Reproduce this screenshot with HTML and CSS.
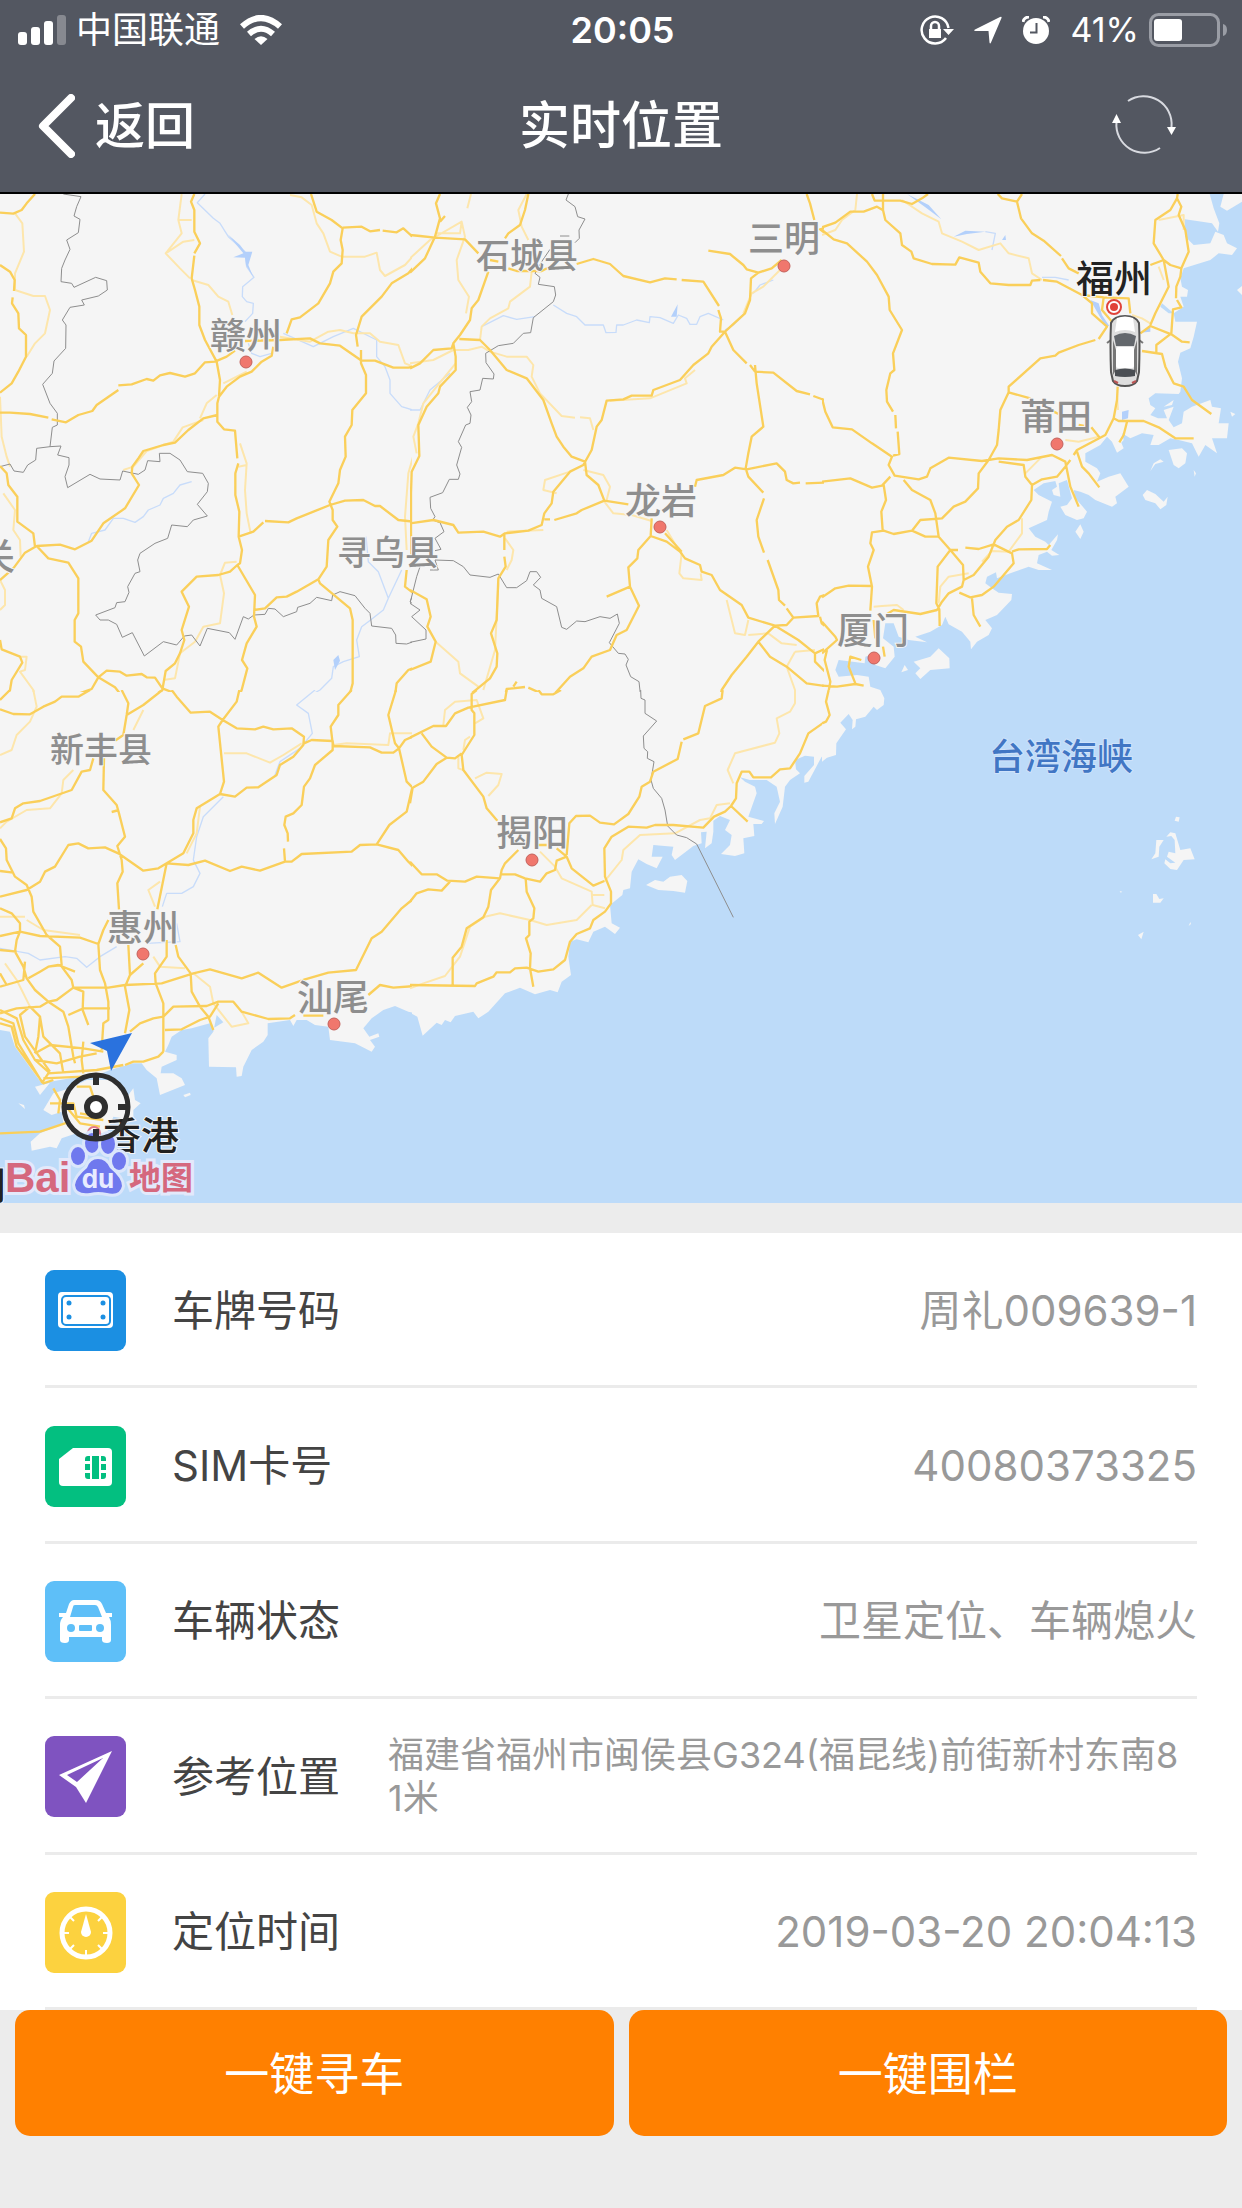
FILE: index.html
```html
<!DOCTYPE html>
<html lang="zh-CN">
<head>
<meta charset="utf-8">
<meta name="viewport" content="width=device-width, initial-scale=1">
<title>实时位置</title>
<link rel="stylesheet" href="styles.css">
</head>
<body>
<div class="app">
  <header class="header">
    <div class="status">
      <div class="status-left">
        <svg width="48" height="30" viewBox="0 0 48 30" fill="#fff" aria-hidden="true">
          <rect x="0" y="17" width="9" height="13" rx="3"/><rect x="13" y="12" width="9" height="18" rx="3"/>
          <rect x="26" y="6" width="9" height="24" rx="3"/><rect x="39" y="0" width="9" height="30" rx="3" opacity=".3"/>
        </svg>
        <span class="carrier">中国联通</span>
        <svg width="42" height="30" viewBox="0 0 42 30" aria-hidden="true">
          <g fill="none" stroke="#fff" stroke-width="6"><path d="M2 11.500Q21 -5.500 40 11.500"/><path d="M9 19Q21 8.500 33 19"/></g>
          <path d="M14.500 24Q21 18.500 27.500 24L21 30Z" fill="#fff"/>
        </svg>
      </div>
      <time class="clock">20:05</time>
      <div class="status-right">
        <svg width="34" height="30" viewBox="0 0 34 30" aria-hidden="true">
          <g fill="none" stroke="#fff" stroke-width="2.500"><path d="M26 23A13.500 13.500 0 1 1 28.500 13"/><path d="M11 14V11a4 4 0 0 1 8 0v3"/></g>
          <path d="M23 14h11l-5.500 6ZM9 14h12v9H9Z" fill="#fff"/>
        </svg>
        <svg width="28" height="28" viewBox="0 0 28 28" aria-hidden="true"><path d="M1 13.500 26 1Q28 0 27.500 2L17 26.500Q16 28.500 15.500 26.500L14.500 15H1.500Q-1 14.500 1 13.500Z" fill="#fff"/></svg>
        <svg width="28" height="28" viewBox="0 0 28 28" aria-hidden="true">
          <circle cx="14" cy="15" r="13" fill="#fff"/><path d="M1 6A6 6 0 0 1 7 1M21 1a6 6 0 0 1 6 5" stroke="#fff" stroke-width="3" fill="none"/>
          <path d="M14.500 7v9.500H8" fill="none" stroke="#535761" stroke-width="2"/>
        </svg>
        <span class="percent">41%</span>
        <svg width="78" height="34" viewBox="0 0 78 34" aria-hidden="true">
          <rect x="1.500" y="1.500" width="68" height="31" rx="8" fill="none" stroke="#9a9da5" stroke-width="3"/>
          <rect x="5" y="6" width="28" height="22" rx="3" fill="#fff"/><path d="M74 11q4 1 4 6t-4 6Z" fill="#9a9da5"/>
        </svg>
      </div>
    </div>
    <nav class="nav">
      <button class="back" type="button">
        <svg width="37" height="64" viewBox="0 0 37 64" aria-hidden="true"><path d="M33 4 5 32l28 28" fill="none" stroke="#fff" stroke-width="8" stroke-linecap="round" stroke-linejoin="round"/></svg>
        <span>返回</span>
      </button>
      <h1 class="title">实时位置</h1>
      <button class="refresh" type="button" aria-label="刷新">
        <svg width="64" height="64" viewBox="0 0 64 64" aria-hidden="true">
          <g fill="none" stroke="#d8dae0" stroke-width="2"><path d="M16 7A28 28 0 0 1 59.500 33"/><path d="M48 54A28 28 0 0 1 4.500 28"/></g>
          <path d="M55 33h9l-4.500 8ZM0 29h9l-4.500-9Z" fill="#fff"/>
        </svg>
      </button>
    </nav>
  </header>

  <main>
    <section class="map" aria-label="地图">
      <svg class="map-canvas" viewBox="0 194 1242 1009">
        <rect class="land" y="194" width="1242" height="1009"/>

        <!-- north-west -->
        <svg x="0" y="190" width="412" height="502" viewBox="0 0 1236 1506">
          <path class="river" d="M615 12 592 38 640 85 660 100 685 140 735 185 740 230 762 262 728 290 727 320 740 335 760 340 758 370 735 395M575 875 540 885 520 910 490 925 480 945 445 960 430 980 405 997 370 985 340 985 315 1020 275 1030 265 1055M850 430 940 470 1000 440 1060 415 1130 450 1130 500 1155 530 1170 570 1170 610 1205 650 1255 665M1098 1040 1105 1115 1135 1145 1165 1225 1150 1260 1105 1295 1085 1310 1070 1350 1078 1400 1030 1415 1000 1430 995 1465 960 1500 905 1530M1205 1140 1165 1225M745 460 755 490 780 500 815 490"/>
          <path class="lake" d="M683 133 720 165 735 185 757 185 745 225 760 262 738 225 735 203 700 202 730 190ZM1015 1395 1020 1412 1005 1440 1000 1410Z"/>
          <path class="minor" d="M45 70 67 100 72 185 45 250 45 300 100 318 135 318 150 360 135 430 105 460 80 500M545 12 535 90 545 130 497 190 540 235 570 265M535 90H575M497 190 550 155 583 150M575 270 625 285 655 320 685 335 697 375M870 15 905 22 935 45 950 100 970 130 990 185 1025 200 1095 200 1130 188 1140 240 1155 258 1215 225 1260 175M0 620 5 740 20 800 30 830M10 910 45 960 40 1020 60 1050 62 1100M720 760 740 820 735 900 740 970 752 1030M715 830 740 825M710 1115 675 1118 660 1155 672 1210 660 1300 610 1310 585 1355 540 1390 525 1465 490 1470M840 440 930 455 985 425 1020 420 1060 430 1110 430 1140 455 1195 465 1215 520 1240 530M370 840 400 830 440 783 520 755 548 712 610 690M600 685 620 640 650 615M670 580 740 545M0 1170 15 1200 15 1245 0 1260M62 1400 80 1400 75 1440 60 1445 100 1500 105 1530M1260 680 1240 730 1245 780 1225 850 1215 980 1220 1080"/>
          <path class="border" d="M190 12 243 20 230 50 222 78 240 88 235 128 200 150 210 178 195 210 185 235 183 275 215 280 222 292 287 262 320 272 322 300 295 318 245 330 253 345 210 352 187 390 198 405 197 475 162 513 157 550 128 583 150 640 172 670 172 705 157 712 150 770 183 768 173 795 207 803 207 825 195 860 203 893 270 853 300 867 360 870 368 843 415 853 435 840 443 812 480 815 478 790 510 790 540 810 562 845 608 850 625 880 622 905 592 943 622 978 580 990 562 1010 515 1005 503 1045 465 1060 420 1090 413 1110 420 1145 405 1150 383 1190 387 1207 375 1235 350 1238 345 1253 287 1275 300 1290 325 1290 350 1303 367 1342 397 1328 433 1398 490 1355 530 1365 553 1338 575 1335 600 1368 622 1315 688 1328 705 1348 730 1280 745 1287 762 1275 795 1273 805 1255 825 1257 850 1280 890 1265 893 1252 930 1240 950 1222 995 1232 998 1215 1020 1205 1065 1217 1095 1255 1110 1270 1115 1308 1175 1315 1187 1335 1188 1360 1220 1362 1260 1348M0 830 30 822 42 843 70 847 83 825 107 810 110 775 150 770M1260 1140 1245 1165 1245 1200 1230 1235 1260 1260"/>
          <path class="major" d="M0 68 40 71 65 60 80 40 105 12M0 225 30 245 44 270 42 303M38 322 36 340 55 370 57 415 78 435 78 500 55 545 35 580 0 608M0 668 30 668 90 672 145 683M155 688 198 697 235 675 277 663 290 645 355 600M355 586 395 583 440 567 460 572 480 556 510 549 555 560 585 550 615 517 645 515 680 500 705 482M583 12 573 35 583 60 583 125 600 160 583 190M583 197 575 265 585 300 598 350 598 405 615 450 650 515 660 570 657 620 652 640 652 695 672 718 705 722 712 805M715 820 706 850 706 915 718 965 716 1040 726 1080 720 1120 712 1125 765 1215 762 1280 770 1310 740 1360 726 1410 742 1435 725 1500 712 1530M657 620 680 590 720 560 755 545 785 515 815 497 820 470M652 675 610 685 565 720 525 758 490 765 430 783 415 805 397 830 395 850 417 885 375 955 310 1000 275 1052 225 1078 180 1064 110 1068M0 1170 40 1135 75 1088 110 1068 145 1105 205 1118 235 1165 235 1270 224 1290 224 1355 243 1370 250 1415 295 1462 345 1492 375 1530M295 1462 320 1442 360 1445 380 1457 425 1452 440 1462 465 1463 487 1495 525 1510 530 1530M295 1462 275 1497 210 1520 165 1527M0 828 20 850 25 885 52 920 52 995 100 1030 105 1070M0 1350 5 1378 60 1400 67 1418 35 1470 30 1500 10 1530M712 1125 690 1145 655 1155 590 1160 545 1205 567 1250 545 1320 553 1350 540 1390 525 1420 497 1443 487 1500 445 1530M716 1040 760 1025 790 997M795 993 865 997 890 985 990 945 1035 932 1090 930 1125 948 1140 948 1195 990 1260 997M762 1260 795 1255 830 1222 860 1220 890 1205 955 1168 960 1180 1050 1255 1058 1290 1058 1480 1050 1510 1030 1530M955 1168 980 1130 985 1050 1012 1010 998 990 998 960 988 935 1015 880 1020 840 1037 800 1035 740 1055 705 1057 660 1098 610 1098 555 1083 520 1083 480M1073 470 1068 435 1085 380 1145 320 1175 280 1225 250 1255 215M860 430 875 388 900 382 955 340 990 280 1000 245 1025 220 1028 180 1022 150 1028 115 995 90 950 65 933 12M1028 113 1085 110 1110 124 1140 120M1148 122 1190 127 1210 115 1235 138 1260 133M840 450 930 445 960 460 1020 467 1085 512 1125 512 1180 533 1225 533 1260 527M735 453 840 450M1220 1140 1215 1190 1260 1225M1260 1425 1225 1440 1190 1480 1183 1530"/>
        </svg>

        <!-- north -->
        <svg x="410" y="190" width="414" height="502" viewBox="0 0 1242 1506">
          <path class="river" d="M430 345 470 370 500 380 525 405 580 405 588 428 618 427 620 405 640 405 680 390 718 398 720 380 750 383 790 400 805 375 830 385 840 403 860 403 870 380 895 370 940 390M215 410 280 377 320 388 375 380M945 420 970 405 1000 375M1030 310 1050 285 1090 270M0 660 30 660 60 600 120 550"/>
          <path class="lake" d="M803 343 800 380 783 380Z"/>
          <path class="minor" d="M183 12 172 55M0 205 60 150 155 95 165 140 140 210 145 270 177 320 168 370M155 95 150 130 80 130M350 12 325 60 335 110 355 150M365 245 360 290 300 335 295 355 240 385 215 410 210 450M240 485 290 500 350 500 370 525 365 560 390 610 455 678 495 683M510 682 540 685 550 720M0 520 70 510 130 480 175 480 215 470 240 485M137 520 80 590 40 640 25 700 10 740 20 790M600 632 720 625 830 580 825 565 855 540M520 840 580 855 600 890 590 930M480 845 405 870 400 900 440 910M583 935 610 970 665 975 725 993M285 1045 310 1080 305 1110 290 1140M290 1025 400 1020M770 1020 800 1070 815 1090 808 1150 820 1165 875 1170 872 1150M950 1230 975 1330 1005 1335 1015 1290M1015 1335 1075 1330 1115 1360 1160 1365M1155 1385 1130 1430 1155 1500 1155 1530M1155 1385 1215 1380M265 1180 255 1380 220 1500M77 1355 145 1415 150 1450 205 1490M1000 370 1025 310 1060 290 1110 240"/>
          <path class="border" d="M475 12 468 30 495 50 503 80 525 87 507 120 508 145 495 158M450 138H478M420 178 395 215 375 250 390 262 385 283 433 290 437 315 430 335 370 383 362 428 340 430 310 460 265 467 227 490 228 518 252 552 250 567 218 565 210 600 180 605 185 635 172 652 183 675 180 700 167 705 145 755 155 772 140 825 150 852 145 868 118 868 98 908 60 922 62 955 75 980 68 990 90 998 102 1025 75 1045 93 1078 75 1082M60 1140 85 1140 75 1110 130 1112 160 1130 180 1155 240 1162 265 1152 290 1193 320 1193 350 1172 360 1145 380 1145 392 1162 370 1185 390 1200 395 1225 440 1250 455 1312 470 1318 500 1293 525 1295 570 1280 600 1285 622 1272 628 1300 598 1358 625 1390 645 1392 655 1408 648 1425 662 1460 687 1475 693 1530M30 1130 20 1160 0 1240 30 1260 5 1280 48 1320 48 1347 0 1357"/>
          <path class="major" d="M90 12 78 40 90 85 75 140 45 205 0 248M90 95 105 78M0 135 30 138 75 143 165 148 205 190M240 210 265 215M295 235 320 243 395 243 440 220M500 222 550 207 600 222 640 258 720 277 765 265 800 268M815 270 880 275 927 348M355 12 345 60 330 105 295 130 285 145M235 245 205 330 185 355 180 390 150 435 130 460 125 475 70 480 30 520 0 535M130 460 137 500 137 540 90 590 85 610 50 650 25 705 28 798 5 845 3 910 3 1100M148 447 210 450 240 480 290 540 350 565 400 630 425 700 440 740 460 770 485 800 525 815 530 855 565 885 583 932 655 943M945 425 905 470 895 490 850 525 810 570 730 600 725 617 665 617 640 628 590 632 575 690 560 710 545 780 520 825 480 845 430 905 425 940 403 970 395 1005 355 1022 285 1030 270 1040 220 1025 145 1028 130 1005 70 990 0 1000M433 990 500 970 515 960 583 932M403 988H420M283 1030V1080M283 1100 287 1130 265 1165 260 1290 243 1330 262 1390 260 1430 240 1465 185 1510 180 1530M0 1200 50 1228 62 1280 52 1310 77 1355 62 1415 0 1440M895 182 960 192 1000 225 1010 238 1045 248 1085 235 1115 210M1045 248 1023 265 1020 330 1005 370 945 425 930 425 933 385 925 360M945 425 970 480 1010 520M1020 525 1035 545 1090 548 1160 603 1200 613M1210 618 1243 630 1250 680 1260 692M1035 525 1040 580 1060 710 1025 740 1015 790 1007 835 1015 860 1060 908M1062 925 1040 990 1045 1040 1062 1088M1073 1110 1105 1200 1107 1230 1125 1247M1130 1255 1150 1283M855 890 860 870 940 855 975 833 1010 838 1100 820 1125 845 1130 870 1150 880 1170 878M1187 880 1260 877M725 985 722 1038 685 1080 682 1105 655 1132 660 1190 687 1247 650 1320 620 1335 600 1380 545 1400 520 1435 480 1460 435 1510 400 1513 355 1493M345 1491 290 1497 282 1530M660 1190 590 1220M320 1475 310 1490M722 1038 770 1055 810 1085 825 1105 870 1125 875 1145 905 1155 930 1200 995 1245 1015 1283 1095 1307 1130 1305 1150 1283 1225 1278 1220 1240 1230 1220 1260 1210M765 1030 815 1085M1095 1307 1045 1355 1010 1400 965 1455 935 1500 930 1530M1095 1307 1165 1350 1215 1390 1215 1415 1260 1460M1045 1355 1080 1400 1130 1430 1190 1480 1260 1490M1230 1280 1235 1300 1260 1320M1215 1390 1260 1370M1250 1380 1245 1440M1190 12 1200 40 1213 90M1260 110 1230 118 1260 140"/>
        </svg>

        <!-- north-east -->
        <svg x="822" y="190" width="420" height="502" viewBox="0 0 1260 1506">
          <path class="sea" d="M1163 12 1175 55 1192 100 1188 125 1170 100 1120 92 1088 88 1090 140 1115 165 1165 160 1180 125 1205 135 1215 160 1245 175 1230 195 1190 190 1165 210 1085 235 1075 265 1080 290 1098 300 1095 320 1075 320 1085 350 1055 370 1020 340 1015 350 1040 370 1055 370 1060 395 1125 395 1115 440 1105 475 1075 488 1068 515 1080 565 1075 605 1070 612 1000 610 980 625 985 645 1000 655 985 675 1008 685 1035 685 1025 660 1055 650 1040 690 1055 712 1080 700 1085 665 1110 650 1165 630 1170 650 1197 655 1190 700 1220 700 1215 745 1170 745 1185 790 1150 765 1130 800 1110 760 1070 750 1045 745 1010 765 985 765 995 735 960 730 925 745 900 730 905 750 898 758 905 775 885 788 870 755 855 740 835 765 790 790 790 815 825 835 835 850 825 875 860 860 895 850 920 890 880 920 885 940 870 950 820 930 800 915 775 905 755 900 760 925 778 945 795 965 785 985 765 990 730 975 715 950 735 945 750 925 735 870 710 880 715 920 695 915 690 900 705 890 700 873 665 880 635 900 650 915 690 935 680 965 675 990 620 1015 640 1040 670 1055 680 1065 708 1033 705 1050 688 1080 712 1095 690 1097 675 1085 650 1095 645 1120 690 1140 650 1140 620 1130 565 1150 525 1165 522 1147 495 1160 490 1180 510 1195 530 1208 570 1212 568 1230 525 1275 490 1290 510 1315 500 1335 465 1355 447 1378 445 1355 420 1325 380 1303 370 1280 360 1305 325 1325 280 1340 315 1357 260 1350 230 1340 215 1300 190 1300 183 1345 215 1370 218 1400 190 1435 160 1425 145 1395 130 1400 128 1420 50 1410 40 1440 50 1460 105 1455 140 1460 145 1490 175 1500 185 1530H1260V12Z"/>
          <path class="land" d="M1205 12 1195 50 1215 62 1260 35V12ZM1245 300 1260 288V315ZM1025 650 1055 630 1050 645ZM1225 665 1240 672 1230 680ZM1040 780 1080 775 1095 790 1090 820 1070 835 1055 825ZM985 843 995 820 1015 808 1025 815 1000 822ZM962 915 975 900 1000 912 1025 935 1037 920 1033 945 1015 958 1000 940 970 930ZM760 1025 775 1003 785 1025 775 1047ZM275 1415 325 1400 350 1375 382 1405 383 1435 325 1440 295 1467 280 1450 295 1435ZM238 1447 248 1425 258 1440ZM1115 840 1122 850 1118 860Z"/>
          <path class="lake" d="M255 12 320 45 358 88 310 52ZM395 140 430 122 490 125 435 132ZM540 150 550 135 552 150ZM805 330 830 340 840 375 862 408 850 408 825 365ZM955 428 985 412 985 425ZM900 665 920 660 918 685 900 690Z"/>
          <path class="river" d="M490 125 520 130 510 180M660 262 700 262 740 270"/>
          <path class="minor" d="M240 30 300 70 350 95 360 130 420 155 470 180 535 160 560 190 620 205 630 250 660 270M0 135 40 120 60 90 100 60 105 12M610 850 660 800M600 985 600 1030 560 1085 510 1083 480 1115M440 1150 380 1160 355 1190 350 1240M155 1250 180 1248 225 1245 245 1260M730 750 770 755 830 740M885 620 888 660M1010 230 1025 270M1010 90 1085 75 1085 120M930 375 960 385 985 400"/>
          <path class="major" d="M0 112 40 98 85 65 125 65 165 50 182 60M150 12 158 32 235 32 270 42 300 25 318 12M183 12V60L190 90 235 130 240 165 268 185 275 205 330 222 400 224 412 202 470 218 475 245 505 280 560 285 625 285 630 272 655 270M663 270 705 275 780 315 845 322 920 325 925 370M0 120 35 148 75 160 135 215 165 255 200 320 203 360 240 420 213 490 217 540 205 550 193 600 195 635 213 665M220 675 222 715M227 725 232 792 213 797M527 12 540 25 585 35 597 85 630 130 665 152 717 198M720 205 740 235 770 250M585 35 600 12M1067 12 1065 25 1045 60 1000 90 995 160 1025 210 1040 290 1000 370 985 405M1065 25 1078 50 1070 75 1090 120 1100 185 1078 235 1075 260 1063 290 1062 325M1025 210 1045 225 1078 235M985 225 1025 210M1065 330 1078 352 1053 358 1048 430 1003 465 1003 488M955 430 985 408 1048 433 1080 455 1103 457M960 483 1020 492 1030 530 1055 580 1085 590 1110 630 1168 672M780 315 810 340 810 370 855 410 830 447M820 450 770 465 710 488 700 497 655 505 560 590 560 607 625 625M695 665 710 672M770 705 788 708M808 712 832 742M845 322 840 360 870 395M887 590 885 630 875 685 850 735 765 780 755 795M875 685 890 693 965 693 1010 712 1060 745 1115 745M915 695 905 735 892 757M560 607 535 660 530 720 525 765 500 810 470 850 468 895 430 935 395 950 360 985 295 990 270 1022M0 625 10 665 32 712 90 718 150 760 210 800 200 825 218 857 290 868 315 860 325 835 380 803 480 813 530 805 615 810 690 795 730 815 745 890 770 950M530 815 605 825 610 860 630 885M765 785 780 830 800 850 832 892M745 810 730 830 705 860 660 868 630 885 628 930 590 990 555 1010 520 1050 500 1100 455 1155 425 1170 420 1190 380 1210 360 1235 345 1260 295 1272 215 1260 190 1275M0 875 85 865 150 893 180 887 205 860M185 885 192 930 178 965 182 1022M245 870 270 900 325 930 340 970 350 1040 385 1080 408 1080M145 1262 150 1190 138 1130 155 1080 145 1060 150 1027 185 1022 215 1032 270 1022 310 1040 350 1040M430 1073 470 1077 515 1063 570 1090 575 1120 515 1190 480 1215 445 1222 412 1208M570 1085 590 1078 675 1077 685 1065M385 1080 423 1125 425 1170M385 1080 347 1130 343 1240 352 1258 353 1308M450 1225 455 1275 475 1310M0 1222 40 1195 80 1187 148 1188M0 1295 40 1340 45 1350 0 1390M15 1380 8 1410 25 1475 15 1530M0 1487 45 1490 100 1482 125 1487M100 1480 80 1430 85 1400 118 1410M155 1290 160 1345M183 1370 188 1400"/>
        </svg>

        <!-- south-west -->
        <svg x="0" y="690" width="412" height="513" viewBox="0 0 1236 1539">
          <path class="sea" d="M0 1020 30 1025 45 1070 125 1180 210 1165 280 1160 330 1140 400 1120 425 1120 440 1140 470 1165 480 1215 555 1185 545 1165 520 1150 482 1150 485 1130 530 1110 530 1095 495 1085 505 1065 515 1040 545 1020 575 1015 630 1000 640 1015 670 997 650 975 640 1025 625 1045 627 1130 708 1132 710 1160 725 1158 730 1130 755 1080 790 1055 803 1035 803 1000 870 990 880 1008 890 990 920 990 945 1005 985 1010 990 1050 1065 1060 1115 1085 1125 1070 1110 1050 1138 1040 1135 1030 1108 1040 1090 1015 1115 985 1150 960 1185 948 1225 965 1245 970 1260 985V1539H0Z"/>
          <path class="land" d="M130 1260 160 1210 210 1195 260 1170 330 1170 370 1200 385 1215 400 1195 405 1230 422 1240 400 1260 400 1290 340 1280 320 1330 230 1330 185 1345 170 1375 150 1370 95 1382 92 1355 120 1330 190 1300 185 1265 155 1275ZM55 1240 72 1245 75 1257ZM550 1215 570 1208 572 1215 555 1222ZM105 1190 150 1178 120 1215Z"/>
          <path class="river" d="M945 0 890 45 925 70 937 130 900 175 840 215 825 255M670 320 610 380 590 440 580 510 600 550 580 590 545 610 500 610 487 650M0 775 85 790 120 810 195 800 230 805 260 832 300 800 350 770M440 760 540 755 530 700"/>
          <path class="minor" d="M0 195 35 180 50 135 90 95 110 50 100 0M0 415 20 395 80 360 150 355 185 310 190 270 220 240M480 575 445 600 465 650M600 350 590 430 560 490M672 190 740 190 810 218 850 195 905 160M1000 165 1040 160 1165 165 1170 130 1260 130M80 690 130 720 240 735M0 680H75M580 850 630 890 640 940 695 1010 745 1000 725 965M15 820 50 870 90 950M460 800 480 830 555 835M400 120 430 60"/>
          <path class="major" d="M0 58 40 72 90 73 130 50 165 35 185 20 235 20 270 0M0 30 30 0M365 0 385 40 380 75 370 135 345 152M380 75 430 45 487 0M515 0 530 20 572 68 630 65 668 90 710 115 765 118 790 110 820 118 875 115 912 140 910 165 880 200 840 225 830 255 775 292 740 293 705 320 660 312 590 355 580 390 580 430 550 490 500 520 472 658M718 0 710 35 668 90 655 110 672 275 660 312M280 205 270 240 245 245 215 300 120 333 70 340 45 355 35 385 0 397M312 205 310 300 350 345 357 370 375 440 352 468 365 510 368 545 352 580 357 658M357 360 335 366M0 447 18 475 20 510 45 560 80 585 95 620 100 665 140 735 180 770 185 825 145 830M0 543 40 548M0 620 80 600 120 575 135 545 165 530 205 465 235 460 265 475 315 472 355 490 430 542 475 535 500 520 565 525 615 512 690 543 725 530 780 542 855 515 875 515 905 492 1055 485 1080 465 1130 463 1195 480 1225 515 1260 550M855 515 852 475M864 455 863 430 853 405 857 380 880 370 905 345 912 290 930 265 945 225 998 180 998 160 992 110 1015 75 1015 45 1055 0M912 160 935 150 998 153 1000 168 1110 172 1145 188 1180 188 1197 175 1220 275 1237 292 1220 365 1168 405 1130 463M1188 0 1165 75 1185 160 1197 175 1215 150 1260 130M1260 610 1205 655 1145 725 1115 745 1068 840 985 848 915 868 845 893 775 848 725 865 630 838 580 850 485 880 375 885 325 893 220 893M1105 915 1140 885 1180 893 1260 887M0 655 35 670 60 700 60 725 50 750 45 785 70 830 80 865 105 900 145 935 190 965 205 1010 220 1100 225 1120M0 738 60 725 120 738 240 743 295 762 300 840 315 880 325 935 325 990 310 1000 305 1080M325 690 310 720 295 762M385 765 390 855 375 890 388 960 375 1030M390 855 430 820M500 750 500 800 465 850 467 880 490 940 490 1085M527 765 535 800 572 850 575 905 600 950 625 980 640 1020M490 980 520 950 620 948 655 935 700 935 725 965 805 987 870 985 885 975M910 977H970M495 1020 545 1018 600 990 630 980 655 940M375 1125 400 1115 430 1115 475 1100 490 1085M390 1025 420 1000 460 985 490 980M0 780 50 785M75 815 70 870 0 890M0 850 20 885M85 865 120 845 145 830 175 825 225 845M185 830 215 870 220 893 170 930 145 935 120 950 50 955 0 970M0 960 50 985 70 1050 105 1110 150 1150M0 985 40 1000 55 1060 125 1175M0 1000 35 1010 50 1070 130 1180 160 1170M90 950 60 975 75 1040 150 1145M90 950 120 980 115 1040 105 1090M120 980 130 1040 180 1090 190 1150M220 893 250 905 248 960 265 1005M205 975 250 955 330 955M105 1090 150 1065 250 1075 310 1085M125 1180 145 1150 290 1140 370 1125M130 1165 250 1160M250 1055 245 1110 250 1150M105 1110 170 1120 240 1100 290 1090M160 1195 180 1230 175 1270M150 1240 220 1240 230 1280 310 1290M0 1330 120 1325 150 1315 210 1295M230 1190 270 1190 280 1220M190 1240 240 1300 300 1310M240 1270 300 1280"/>
        </svg>

        <!-- south -->
        <svg x="410" y="690" width="414" height="513" viewBox="0 0 1242 1539">
          <path class="sea" d="M1260 202 1235 200 1195 275 1183 278 1183 258 1212 225 1212 200 1185 197 1155 210 1158 238 1170 250 1140 270 1125 290 1118 350 1095 402 1093 370 1110 335 1100 290 1070 270 1020 270 990 262 1005 275 1035 290 1040 310 1015 380 1062 393 1055 402 1030 402 1033 438 1000 445 1003 490 975 498 933 492 960 465 965 435 945 420 960 390 930 378 910 392 910 425 905 460 885 475 890 425 873 427 875 460 850 468 795 510 785 495 790 470 730 465 725 500 758 500 740 535 710 522 685 508 665 545 660 595 640 600 637 615 600 645 605 700 630 713 615 732 585 710 550 725 535 757 500 748 480 755 475 800 483 855 455 875 443 907 420 900 375 913 330 893 285 910 235 965 205 985 190 965 135 978 122 997 105 990 95 1005 80 998 38 1037 22 980 0 968V1539H1260Z"/>
          <path class="land" d="M708 585 735 570 760 575 780 560 815 555 832 573 825 608 790 603 745 600Z"/>
          <path class="minor" d="M100 105 105 60 135 35 200 30 220 85 195 100M145 195 145 235 160 240M160 180 165 150 180 140M195 265 230 248 275 252 265 285 235 318M390 485 435 530 455 565 545 605 548 645 585 655M548 615H583M545 645 500 690 410 705 360 690 270 670 225 680 180 710 150 800 105 858 40 880 0 895M583 575 635 510 640 480 690 435 795 430 870 390 900 385 920 345 960 340M1155 0 1155 40 1140 65 1100 85 1108 130 1095 158 975 190 953 240 970 280"/>
          <path class="border" d="M692 0 693 25 705 30 705 70 740 93 700 138 702 175 713 185 712 205 732 215 723 270 730 295 755 325 765 360 773 408 800 435 830 443 860 462 970 682"/>
          <path class="major" d="M0 143 70 108 108 108 135 70 175 53 285 30 290 0M200 0 185 12 185 60 193 70 193 135 155 195 160 240 220 320 230 355 262 392M35 130 65 170 110 203 135 205 155 190M110 203 80 222 40 275 8 293 0 340M385 0 395 13 430 13 453 0M938 0 935 25 885 48 865 130 820 148M815 155 803 207 730 245 720 275 695 290 688 320 655 372 612 403 570 398 540 377 498 378 478 400 470 495M1260 25 1255 75 1245 95 1195 130 1170 190 1140 235 1110 238 1083 262 1030 262 1018 245 995 245 980 280 978 325 963 348 945 365 912 380 880 413 790 405 735 405 710 413 655 410 605 440 583 475 585 560 603 605 603 640 585 665 550 690 540 715 500 732 480 755 465 810 430 838 385 845 350 833 315 835 300 847 260 847 250 860 200 880 195 888 0 885M963 348 1013 395M0 515 35 553 80 553 112 572 165 575 200 560 270 565 275 540 285 520 325 480M0 635 20 610 55 598 95 602 120 575M270 565 243 600 235 650 220 682 170 715 155 770 128 803 128 885M275 553 315 553 345 565 390 575 410 550 435 540 440 512 470 500 485 535 550 587 583 573M347 565 350 605 373 655 370 685 358 695 358 735 348 745 362 790 360 835 370 890M440 475 470 500M380 465H410"/>
        </svg>

        <!-- south-east -->
        <svg x="822" y="690" width="420" height="513" viewBox="0 0 1260 1539">
          <path class="sea" d="M0 0H1260V1539H0Z"/>
          <path class="land" d="M0 0H175L187 25 185 45 165 60 155 50 130 80 102 88 100 110 90 118 92 90 80 72 55 98 72 118 43 160 42 195 15 203 0 215ZM1058 392 1062 380 1073 382 1070 395ZM988 508 1000 490 1003 450 1025 450 1012 470 1010 500ZM1033 440 1045 427 1060 430 1075 480 1105 475 1118 508 1085 510 1065 540 1045 537 1027 520 1030 508 1045 520 1060 518 1035 500 1040 485 1060 490 1058 450 1048 438ZM993 612 1003 612 1012 627 1025 625 1015 638 993 638ZM948 735 965 725 958 748ZM1100 708 1105 696 1107 702ZM893 603 901 605 896 608Z"/>
          <path class="major" d="M20 0 12 35 23 75 12 95 0 100"/>
        </svg>

        <g class="dot">
          <circle cx="246" cy="362" r="6"/><circle cx="784" cy="266" r="6"/><circle cx="660" cy="527" r="6"/>
          <circle cx="1057" cy="444" r="6"/><circle cx="874" cy="658" r="6"/><circle cx="532" cy="860" r="6"/>
          <circle cx="143" cy="954" r="6"/><circle cx="334" cy="1024" r="6"/>
        </g>
        <circle cx="1114" cy="307" r="7" fill="#fff" stroke="#e0433a" stroke-width="2"/><circle cx="1114" cy="307" r="4" fill="#e0433a"/>
        <circle cx="94" cy="1133" r="6" fill="#fff" stroke="#e07a8a" stroke-width="2"/>

        <g class="place">
          <text x="246" y="349">赣州</text><text x="784" y="252">三明</text><text x="661" y="514">龙岩</text>
          <text x="1056" y="430">莆田</text><text x="873" y="644">厦门</text><text x="532" y="846">揭阳</text>
          <text x="143" y="941">惠州</text><text x="333" y="1011">汕尾</text><text x="-3" y="570">关</text>
        </g>
        <g class="place county">
          <text x="527" y="268">石城县</text><text x="388" y="565">寻乌县</text><text x="101" y="762">新丰县</text>
        </g>
        <g class="place capital">
          <text x="1114" y="292">福州</text><text x="141" y="1149">香港</text><text x="-32" y="1199">澳门</text>
        </g>
        <text class="place strait" x="1061" y="770">台湾海峡</text>

        <!-- vehicle -->
        <g transform="translate(1106 314)">
          <path d="M5 26 1 29M33 26 37 29" stroke="#777" stroke-width="2"/>
          <path d="M5 9Q8 2 19 2Q30 2 33 9Q34 30 33 58L31 67Q28 72 19 72Q10 72 7 67L5 58Q4 30 5 9Z" fill="#dedede" stroke="#555" stroke-width="2"/>
          <path d="M11 4Q19 1 27 4L29 18Q19 14 9 18Z" fill="#fff"/>
          <path d="M8 22Q19 16 30 22L28 32H10Z" fill="#63676c"/>
          <path d="M7 26 10 36V56L7 61ZM31 26 28 36V56L31 61Z" fill="#777"/>
          <rect x="10" y="33" width="18" height="21" rx="2" fill="#fff"/>
          <path d="M9 56Q19 53 29 56L29 62Q19 64 9 62Z" fill="#4b4f54"/>
          <path d="M8 67l4 2M30 67l-4 2" stroke="#b55" stroke-width="2"/>
        </g>

        <!-- heading -->
        <path d="M90 1043 132 1033 111 1071 107 1051Z" fill="#2a72de"/>

        <!-- map provider mark -->
        <g class="provider">
          <g fill="#6f78ee" stroke="#dbe6fb" stroke-width="6" paint-order="stroke">
            <ellipse cx="78" cy="1156" rx="7" ry="9"/><ellipse cx="92" cy="1143" rx="7" ry="10"/><ellipse cx="108" cy="1144" rx="7" ry="10"/><ellipse cx="119" cy="1161" rx="7" ry="9"/>
            <path d="M98 1159Q106 1159 110 1168Q122 1178 122 1186Q120 1196 107 1193Q98 1191 90 1193Q76 1195 75 1185Q76 1177 87 1168Q90 1159 98 1159Z"/>
          </g>
          <text class="brand" x="5" y="1192">Bai</text>
          <text class="brand-du" x="98" y="1188">du</text>
          <text class="brand-cn" x="129" y="1189">地图</text>
        </g>
      </svg>
      <button class="locate" type="button" aria-label="定位">
        <svg width="70" height="70" viewBox="0 0 70 70" aria-hidden="true">
          <g fill="none" stroke="#2e2e2e" stroke-width="5"><circle cx="35" cy="35" r="32"/><path d="M35 3v10M35 57v10M3 35h10M57 35h10" stroke-width="6"/></g>
          <circle cx="35" cy="35" r="9" fill="#fff" stroke="#2e2e2e" stroke-width="6"/>
        </svg>
      </button>
    </section>

    <dl class="details">
      <div class="row">
        <dt>
          <svg class="icon" viewBox="0 0 81 81" aria-hidden="true"><rect width="81" height="81" rx="9" fill="#1b8fe2"/><rect x="13" y="22" width="55" height="36" rx="4" fill="#fff"/><rect x="17" y="26" width="48" height="29" rx="4" fill="none" stroke="#1b8fe2" stroke-width="2"/><g fill="#1b8fe2"><circle cx="24" cy="33" r="2.500"/><circle cx="58" cy="33" r="2.500"/><circle cx="24" cy="47" r="2.500"/><circle cx="58" cy="47" r="2.500"/></g></svg>
          车牌号码
        </dt>
        <dd>周礼009639-1</dd>
      </div>
      <div class="row">
        <dt>
          <svg class="icon" viewBox="0 0 81 81" aria-hidden="true"><rect width="81" height="81" rx="9" fill="#03bf80"/><path d="M28 22H63Q67 22 67 26V56Q67 60 63 60H18Q14 60 14 56V33Z" fill="#fff"/><g fill="#03bf80"><path d="M47 30H54V53H47ZM43 30H45V35H40V33Q40 30 43 30ZM40 38H45V44H40ZM40 47H45V53H43Q40 53 40 50ZM56 30H58Q61 30 61 33V35H56ZM56 38H61V44H56ZM56 47H61V50Q61 53 58 53H56Z"/></g></svg>
          SIM卡号
        </dt>
        <dd>40080373325</dd>
      </div>
      <div class="row">
        <dt>
          <svg class="icon" viewBox="0 0 81 81" aria-hidden="true"><rect width="81" height="81" rx="9" fill="#5ebff8"/><path d="M29 19H51Q55 19 57 23L61 32H67V36H64Q66 39 66 44V59Q66 62 62 62Q57 62 57 59V56H24V59Q24 62 20 62Q15 62 15 59V44Q15 39 18 36H14V32H21L24 23Q26 19 29 19Z" fill="#fff"/><path d="M30 24H50Q52 24 53 26L57 36H25L28 26Q28 24 30 24Z" fill="#5ebff8"/><g fill="#5ebff8"><circle cx="26" cy="47" r="4"/><circle cx="55" cy="47" r="4"/><rect x="34" y="44" width="13" height="6" rx="1"/></g></svg>
          车辆状态
        </dt>
        <dd>卫星定位、车辆熄火</dd>
      </div>
      <div class="row">
        <dt>
          <svg class="icon" viewBox="0 0 81 81" aria-hidden="true"><rect width="81" height="81" rx="9" fill="#7f53c0"/><path d="M67 15 41 67 31 51 14 39ZM58 22 22 39 32 46Z" fill="#fff" fill-rule="evenodd"/></svg>
          参考位置
        </dt>
        <dd class="address">福建省福州市闽侯县G324(福昆线)前街新村东南81米</dd>
      </div>
      <div class="row">
        <dt>
          <svg class="icon" viewBox="0 0 81 81" aria-hidden="true"><rect width="81" height="81" rx="9" fill="#fcd23f"/><circle cx="41" cy="41" r="24" fill="none" stroke="#fff" stroke-width="5"/><path d="M19 41h5M58 41h5M41 63v-5M25 25l4 4M57 25l-4 4M25 57l4-4M57 57l-4-4" stroke="#fff" stroke-width="2"/><path d="M41 22 46 40A5 5 0 1 1 36 40Z" fill="#fff"/></svg>
          定位时间
        </dt>
        <dd>2019-03-20 20:04:13</dd>
      </div>
    </dl>

    <div class="actions">
      <button class="action" type="button">一键寻车</button>
      <button class="action" type="button">一键围栏</button>
    </div>
  </main>
</div>
</body>
</html>
```
FILE: styles.css
```css
* {
  box-sizing: border-box;
}

body {
  margin: 0;
  background: #ececec;
  color: #444;
  font-family: Inter, "Noto Sans CJK SC", sans-serif;
}

button {
  padding: 0;
  border: 0;
  background: none;
  color: inherit;
  font: inherit;
  cursor: pointer;
}

svg {
  flex: none;
}

/* Header */
.header {
  border-bottom: 2px solid #000;
  background: #535761;
  color: #fff;
}

.status,
.nav {
  display: grid;
  grid-template-columns: 1fr auto 1fr;
  align-items: center;
}

.status {
  height: 60px;
  padding: 0 15px 0 18px;
  font-size: 36px;
  line-height: 60px;
}

.status-left,
.status-right {
  display: flex;
  align-items: center;
}

.status-left {
  gap: 10px;
}

.carrier {
  margin-right: 10px;
}

.clock {
  font-weight: 600;
}

.status-right {
  justify-content: flex-end;
  gap: 20px;
}

.percent {
  margin-right: -10px;
  font-size: 34px;
}

.nav {
  height: 132px;
  padding: 0 38px;
  font-size: 50px;
  line-height: 72px;
}

.back {
  display: flex;
  align-items: center;
  justify-self: start;
  gap: 20px;
  font-weight: 500;
}

.title {
  margin: 0;
  font-size: 51px;
  font-weight: 500;
}

.refresh {
  display: flex;
  justify-self: end;
  margin-right: 28px;
}

/* Map */
.map {
  position: relative;
  margin-bottom: 30px;
}

.map-canvas {
  display: block;
  width: 100%;
  height: auto;
}

.land {
  fill: #f5f5f5;
}

.sea {
  fill: #bddbf9;
}

.lake {
  fill: #b3d0fb;
}

.river,
.minor,
.major,
.border {
  fill: none;
  stroke-linejoin: round;
}

.river {
  stroke: #c8dcfa;
  stroke-width: 4;
}

.minor {
  stroke: #fde6ac;
  stroke-width: 6;
}

.major {
  stroke: #facf5a;
  stroke-width: 7;
}

.border {
  stroke: #8e8e8e;
  stroke-width: 3;
}

.dot {
  fill: #f0776d;
  stroke: #c4625c;
  stroke-width: 1;
}

.place {
  fill: #8e8e8e;
  stroke: #f5f5f5;
  stroke-width: 2;
  paint-order: stroke;
  font-size: 36px;
  font-weight: 500;
  text-anchor: middle;
}

.county {
  font-size: 34px;
}

.capital {
  fill: #222;
  font-size: 38px;
}

.strait {
  fill: #4176c4;
  stroke: #cfe2fa;
}

.provider text {
  stroke: #e3e9fb;
  stroke-width: 6;
  paint-order: stroke;
  fill: #d5687e;
  font-weight: 700;
}

.provider .brand {
  font-family: "Liberation Sans", sans-serif;
  font-size: 42px;
}

.provider .brand-du {
  fill: #e8ecff;
  stroke: none;
  font-size: 26px;
  text-anchor: middle;
}

.provider .brand-cn {
  font-size: 32px;
}

.locate {
  position: absolute;
  bottom: 61px;
  left: 61px;
  display: flex;
}

/* Details */
.details {
  display: grid;
  grid-auto-rows: 1fr;
  min-height: 777px;
  margin: 0;
  padding: 0 45px;
  background: #fff;
  font-size: 42px;
  line-height: 60px;
}

.row {
  display: flex;
  align-items: center;
  gap: 48px;
  padding-top: 3px;
  border-bottom: 3px solid #ebebeb;
}

.row dt {
  display: flex;
  flex: none;
  align-items: center;
  gap: 46px;
}

.row dd {
  flex: 1;
  margin: 0;
  color: #999;
  text-align: right;
}

.row .address {
  padding-right: 10px;
  font-size: 36px;
  line-height: 43px;
  text-align: left;
  word-break: break-all;
}

.icon {
  width: 81px;
  height: 81px;
}

/* Actions */
.actions {
  display: grid;
  grid-template-columns: 1fr 1fr;
  gap: 15px;
  padding: 0 15px 72px;
}

.action {
  height: 126px;
  padding-bottom: 4px;
  border-radius: 15px;
  background: #ff8000;
  color: #fff;
  font-size: 45px;
}
```
